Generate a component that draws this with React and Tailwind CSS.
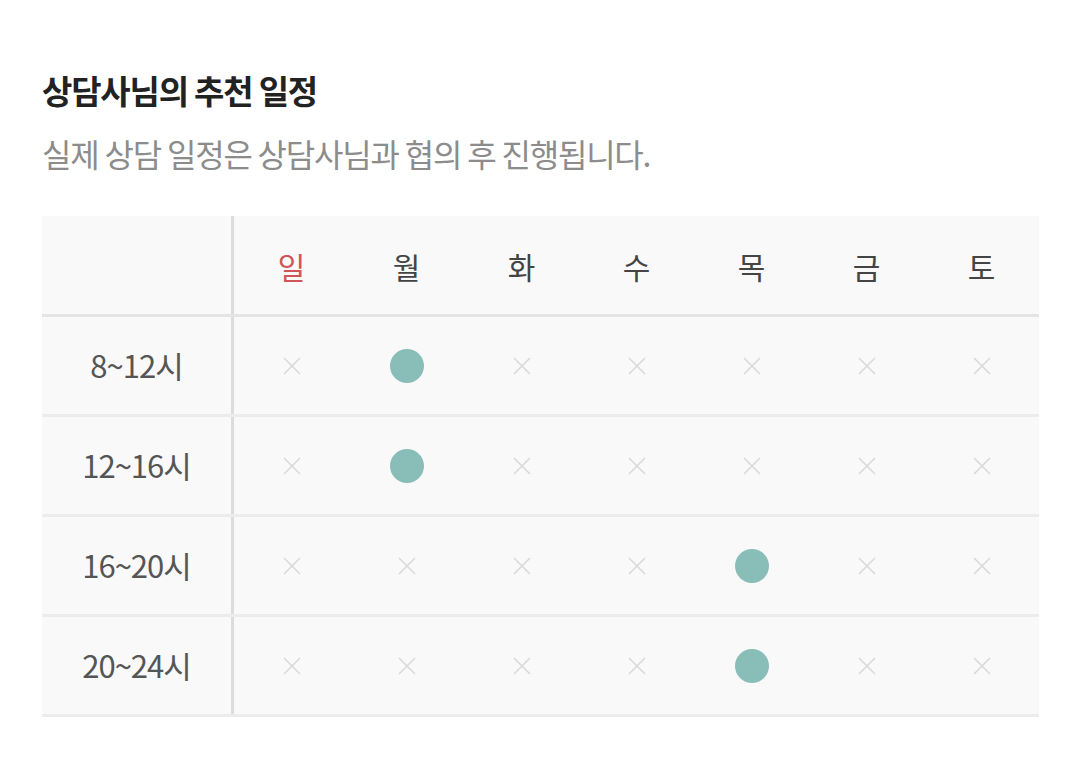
import React from "react";

const days = ["일", "월", "화", "수", "목", "금", "토"];

const slots = [
  { label: "8~12시", on: [1] },
  { label: "12~16시", on: [1] },
  { label: "16~20시", on: [4] },
  { label: "20~24시", on: [4] },
];

const Cross = () => (
  <svg width="18" height="18" viewBox="0 0 18 18" fill="none">
    <path d="M1 1L17 17M17 1L1 17" stroke="#d9d9d9" strokeWidth="1.6" />
  </svg>
);

const App = () => {
  return (
    <div
      className="min-h-screen w-[1080px] bg-white px-[42px] pt-[68px]"
      style={{ fontFamily: '"Noto Sans CJK KR", "Noto Sans", sans-serif' }}
    >
      <h2 className="text-[33px] font-bold leading-[44px] tracking-[-1.2px] text-[#222]">
        상담사님의 추천 일정
      </h2>
      <p className="mt-[19px] text-[32px] leading-[44px] tracking-[-1.2px] text-[#8c8c8c]">
        실제 상담 일정은 상담사님과 협의 후 진행됩니다.
      </p>

      <div className="mt-[41px] w-[997px] bg-[#f9f9f9]">
        {/* header */}
        <div className="flex h-[101px] border-b-[3px] border-[#e4e4e4]">
          <div className="w-[192px] shrink-0 border-r-[3px] border-[#dcdcdc]" />
          {days.map((d, i) => (
            <div
              key={d}
              className={
                "flex w-[115px] items-center justify-center pt-[2px] text-[30px] " +
                (i === 0 ? "text-[#d0555a]" : "text-[#444]")
              }
            >
              {d}
            </div>
          ))}
        </div>

        {slots.map((s) => (
          <div key={s.label} className="flex h-[100px] border-b-[3px] border-[#ececec]">
            <div className="flex w-[192px] shrink-0 items-center justify-center border-r-[3px] border-[#dcdcdc] text-[31px] tracking-[-1px] text-[#555]">
              {s.label}
            </div>
            {days.map((d, i) => (
              <div key={d} className="flex w-[115px] items-center justify-center">
                {s.on.includes(i) ? (
                  <div className="h-[34px] w-[34px] rounded-full bg-[#88bdb8]" />
                ) : (
                  <Cross />
                )}
              </div>
            ))}
          </div>
        ))}
      </div>
    </div>
  );
};

export default App;
